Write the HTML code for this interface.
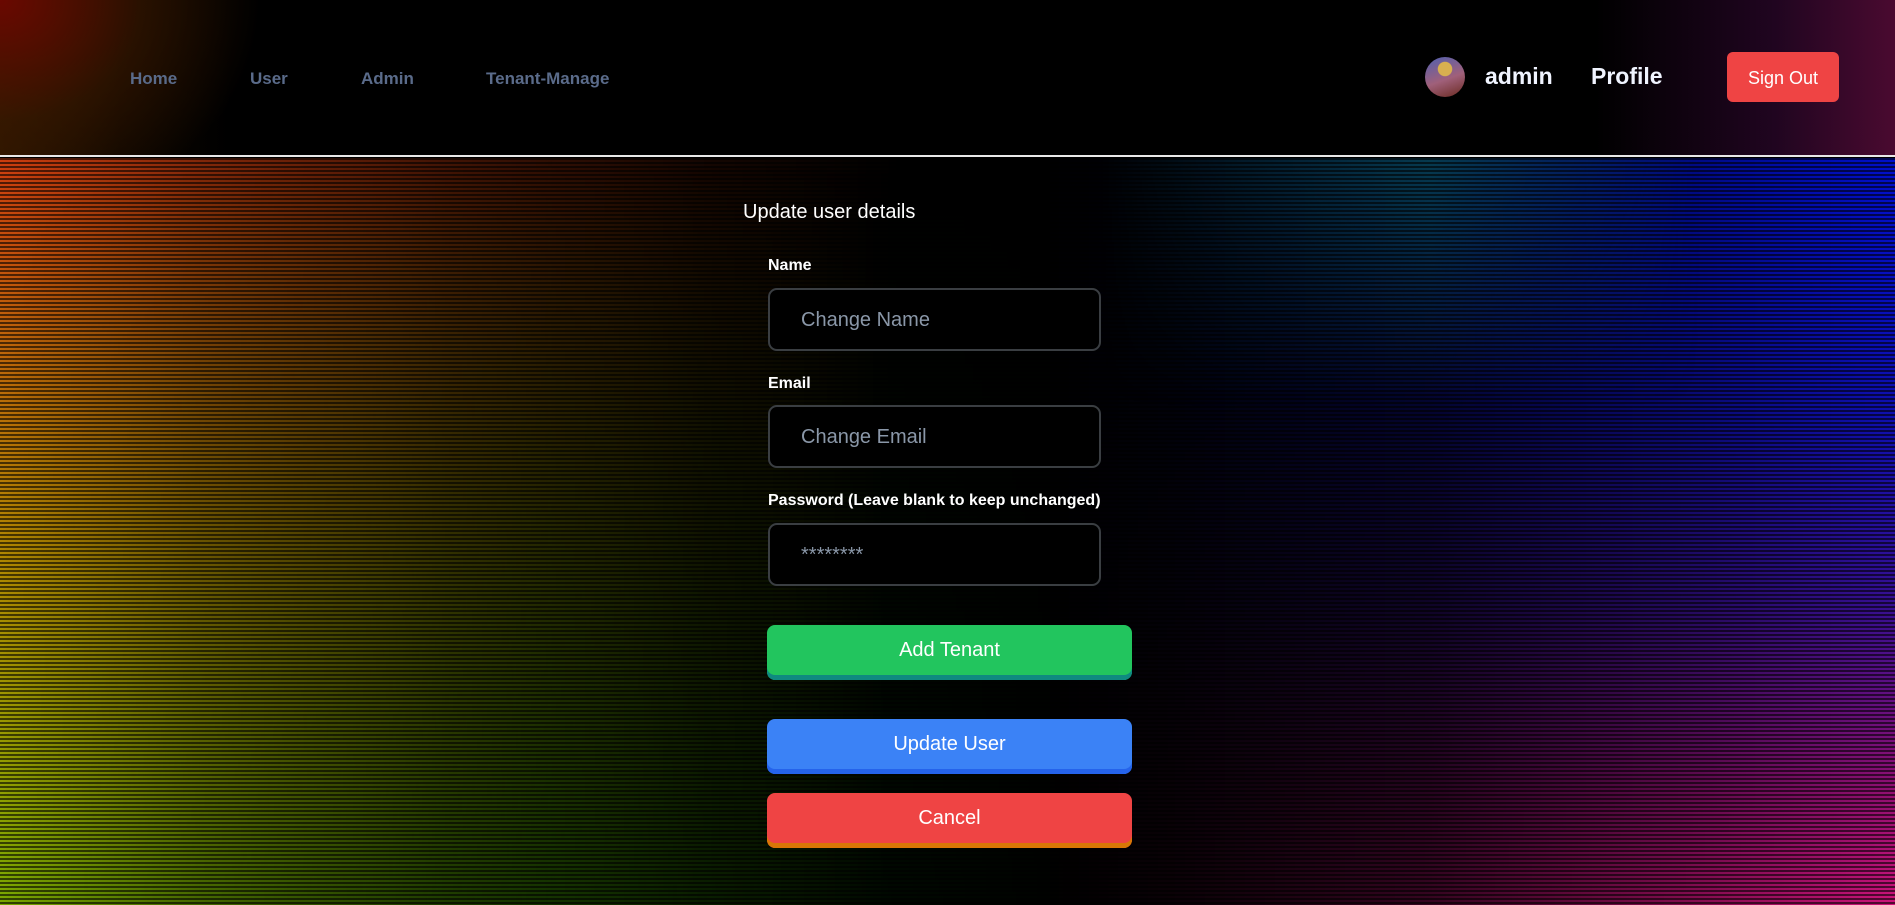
<!DOCTYPE html>
<html><head><meta charset="utf-8"><style>
*{box-sizing:border-box;margin:0;padding:0}
body{width:1895px;height:905px;overflow:hidden;background:#000;font-family:"Liberation Sans",Arial,sans-serif;position:relative}
.bgL{position:absolute;left:0;top:158px;width:1000px;height:747px;background:linear-gradient(180deg,#d8400f 0%,#c86a0a 25%,#b89000 55%,#98a800 85%,#80b000 100%);-webkit-mask-image:linear-gradient(90deg,rgba(0,0,0,.95) 0%,rgba(0,0,0,.6) 20%,rgba(0,0,0,.3) 45%,rgba(0,0,0,.1) 70%,rgba(0,0,0,0) 90%)}
.bgL2{position:absolute;left:0;top:158px;width:1100px;height:747px;background:linear-gradient(180deg,rgba(0,90,0,.0),rgba(0,90,0,.5));-webkit-mask-image:linear-gradient(90deg,rgba(0,0,0,0),rgba(0,0,0,.5) 50%,rgba(0,0,0,0))}
.bgR{position:absolute;right:0;top:158px;width:850px;height:747px;background:linear-gradient(180deg,#0010d8 0%,#1010b8 35%,#3a109a 60%,#9a1078 85%,#d81480 100%);-webkit-mask-image:linear-gradient(270deg,rgba(0,0,0,.95) 0%,rgba(0,0,0,.6) 25%,rgba(0,0,0,.25) 55%,rgba(0,0,0,.05) 85%,rgba(0,0,0,0) 100%)}
.bgR2{position:absolute;left:1100px;top:158px;width:600px;height:250px;background:linear-gradient(180deg,#0a6060,rgba(0,0,0,0));-webkit-mask-image:linear-gradient(90deg,rgba(0,0,0,0),rgba(0,0,0,.6) 55%,rgba(0,0,0,0))}
.stripes{position:absolute;left:0;top:158px;width:1895px;height:747px;background:repeating-linear-gradient(180deg,rgba(0,0,0,.6) 0 2px,rgba(0,0,0,0) 2px 4px)}
header{position:absolute;left:0;top:0;width:1895px;height:157px;background:
radial-gradient(ellipse 260px 220px at 0 0,#6a0800 0%,rgba(60,25,0,.6) 55%,rgba(0,0,0,0) 100%),
linear-gradient(90deg,rgba(60,30,0,.7) 0,rgba(30,15,0,.4) 120px,rgba(0,0,0,0) 230px),
linear-gradient(270deg,#4a0a30 0,#200520 120px,rgba(0,0,0,0) 300px),#000;border-bottom:2px solid #e8e8e8}
.nav{position:absolute;top:69px;font-size:17px;font-weight:bold;color:#5a6b8a}
.av{position:absolute;left:1425px;top:57px;width:40px;height:40px;border-radius:50%;background:radial-gradient(circle at 50% 30%,#d8b050 0 20%,transparent 22%),linear-gradient(160deg,#5060b0,#a0607a 55%,#6a2a20)}
.hb{position:absolute;top:63px;font-size:23px;font-weight:bold;color:#f0f4ff}
.so{position:absolute;left:1727px;top:52px;width:112px;height:50px;background:#ef4444;border-radius:6px;color:#fff;font-size:18px;text-align:center;line-height:52px}
.title{position:absolute;left:743px;top:201px;color:#fff;font-size:20px}
.lbl{position:absolute;left:768px;color:#fff;font-size:16px;font-weight:bold}
.inp{position:absolute;left:768px;width:333px;height:63px;border:2px solid #3a3e42;border-radius:9px;background:#000;color:#8a97a8;font-size:20px;padding-left:31px;line-height:61px}
.btn{position:absolute;left:767px;width:365px;height:55px;border-radius:8px;color:#fff;font-size:20px;text-align:center;line-height:51px}
</style></head><body>
<div class="bgL"></div><div class="bgL2"></div><div class="bgR"></div><div class="bgR2"></div><div class="stripes"></div>
<header>
<div class="nav" style="left:130px">Home</div>
<div class="nav" style="left:250px">User</div>
<div class="nav" style="left:361px">Admin</div>
<div class="nav" style="left:486px">Tenant-Manage</div>
<div class="av"></div>
<div class="hb" style="left:1485px">admin</div>
<div class="hb" style="left:1591px">Profile</div>
<div class="so">Sign Out</div>
</header>
<div class="title">Update user details</div>
<div class="lbl" style="top:257px">Name</div>
<div class="inp" style="top:288px">Change Name</div>
<div class="lbl" style="top:375px">Email</div>
<div class="inp" style="top:405px">Change Email</div>
<div class="lbl" style="top:492px">Password (Leave blank to keep unchanged)</div>
<div class="inp" style="top:523px">********</div>
<div class="btn" style="top:625px;background:#22c55e;box-shadow:inset 0 -5px 0 #0f8a80">Add Tenant</div>
<div class="btn" style="top:719px;background:#3b82f6;box-shadow:inset 0 -5px 0 #2563eb">Update User</div>
<div class="btn" style="top:793px;background:#ef4444;box-shadow:inset 0 -5px 0 #d97706">Cancel</div>
</body></html>
